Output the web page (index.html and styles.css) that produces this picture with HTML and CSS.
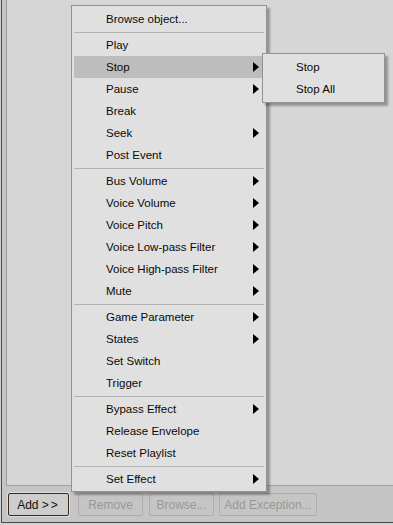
FILE: index.html
```html
<!DOCTYPE html>
<html lang="en">
<head>
    <meta charset="UTF-8">
    <meta name="viewport" content="width=device-width, initial-scale=1.0">
    <title>Context Menu</title>
    <link rel="stylesheet" href="styles.css">
</head>
<body>
    <div class="window">
        <div class="panel"></div>
        <div class="bar">
            <button class="btn btn-add">Add <span class="chevrons">&gt;&gt;</span></button>
            <button class="btn btn-off">Remove</button>
            <button class="btn btn-off btn-browse">Browse...</button>
            <button class="btn btn-off btn-wide">Add Exception...</button>
        </div>

        <ul class="menu">
            <li class="item">Browse object...</li>
            <li class="sep"></li>
            <li class="item">Play</li>
            <li class="item sub active">Stop</li>
            <li class="item sub">Pause</li>
            <li class="item">Break</li>
            <li class="item sub">Seek</li>
            <li class="item">Post Event</li>
            <li class="sep"></li>
            <li class="item sub">Bus Volume</li>
            <li class="item sub">Voice Volume</li>
            <li class="item sub">Voice Pitch</li>
            <li class="item sub">Voice Low-pass Filter</li>
            <li class="item sub">Voice High-pass Filter</li>
            <li class="item sub">Mute</li>
            <li class="sep"></li>
            <li class="item sub">Game Parameter</li>
            <li class="item sub">States</li>
            <li class="item">Set Switch</li>
            <li class="item">Trigger</li>
            <li class="sep"></li>
            <li class="item sub">Bypass Effect</li>
            <li class="item">Release Envelope</li>
            <li class="item">Reset Playlist</li>
            <li class="sep"></li>
            <li class="item sub">Set Effect</li>
        </ul>

        <ul class="menu submenu">
            <li class="item">Stop</li>
            <li class="item">Stop All</li>
        </ul>
    </div>
</body>
</html>
```

FILE: styles.css
```css
body {
    margin: 0;
    background-color: #d2d2d2;
    font-family: "Liberation Sans", Arial, sans-serif;
    font-size: 11.5px;
    color: #0a0a0a;
}
.window {
    position: relative;
    width: 392px;
    height: 522px;
    margin-left: 1px;
    background-color: #c5c5c5;
    border-left: 1px solid #4a4a4a;
    border-bottom: 1px solid #4a4a4a;
    box-sizing: content-box;
    display: flex;
    flex-direction: column;
}
.panel {
    height: 485px;
    margin-left: 4px;
    background-color: #d6d6d6;
    border-left: 1px solid #9c9c9c;
    border-bottom: 1px solid #a4a4a4;
}
.bar {
    display: flex;
    gap: 6px;
    padding: 7px 0 6px 5px;
}
.btn {
    height: 23px;
    padding: 0;
    font-family: inherit;
    font-size: 12px;
    background-color: #c5c5c5;
    border: 1px solid #adadad;
    border-radius: 2px;
    box-sizing: border-box;
}
.btn-add {
    width: 61px;
    margin: 0 3px 0 1px;
    color: #111;
    background-color: #cdcdcd;
    border-color: #3b2a18;
    box-shadow: 0 0 0 1px #dedede;
}
.chevrons {
    letter-spacing: 2px;
}
.btn-off {
    width: 65px;
    color: #989898;
}
.btn-browse {
    margin-right: -1px;
}
.btn-wide {
    width: 98px;
}
.menu {
    position: absolute;
    left: 69px;
    top: 5px;
    width: 196px;
    margin: 0;
    padding: 2px 2px 1px 2px;
    list-style: none;
    background-color: #e0e0e0;
    border: 1px solid #929292;
    box-sizing: border-box;
    box-shadow: 3px 3px 2px rgba(0, 0, 0, 0.3);
}
.item {
    position: relative;
    height: 22px;
    line-height: 22px;
    padding-left: 32px;
    white-space: nowrap;
}
.item.active {
    background-color: #bdbdbd;
}
.sub::after {
    content: "";
    position: absolute;
    right: 5px;
    top: 6px;
    border-left: 6px solid #000;
    border-top: 5px solid transparent;
    border-bottom: 5px solid transparent;
}
.sep {
    height: 4px;
    position: relative;
}
.sep::before {
    content: "";
    position: absolute;
    left: 0;
    right: 0;
    top: 2px;
    border-top: 1px solid #b2b2b2;
}
.submenu {
    left: 260px;
    top: 53px;
    width: 123px;
    height: 50px;
}
.submenu .item {
    padding-left: 31px;
}
```
